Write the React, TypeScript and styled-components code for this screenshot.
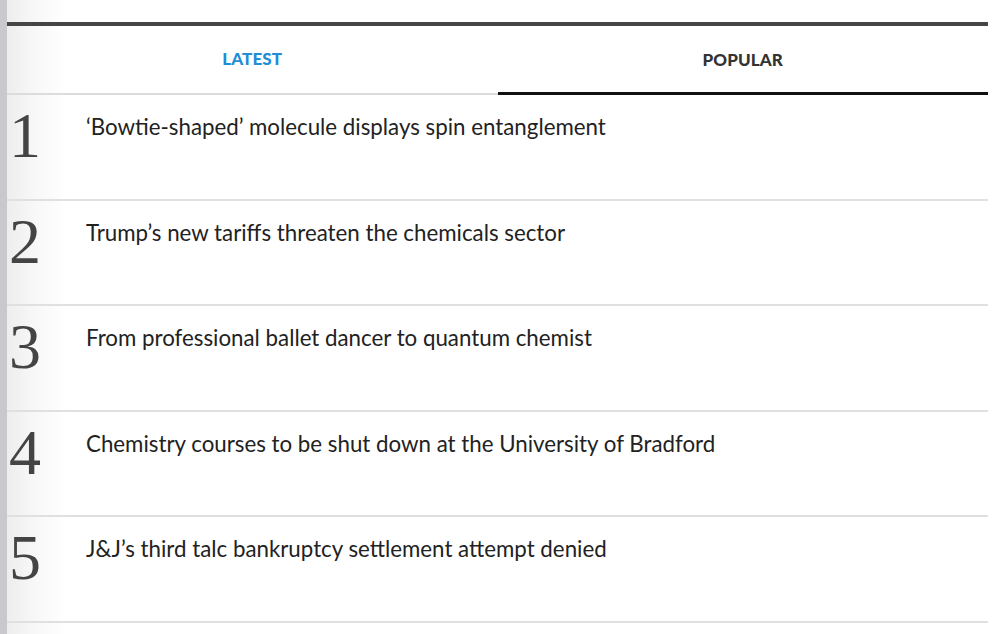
import React from "react";
import styled, { createGlobalStyle } from "styled-components";

const GlobalStyle = createGlobalStyle`
  html, body {
    margin: 0;
    padding: 0;
    background: #fff;
  }
  body {
    font-family: "Lato", "Liberation Sans", sans-serif;
  }
`;

const Page = styled.div`
  display: flex;
  width: 1000px;
  height: 634px;
  overflow: hidden;
  background: #fff;
`;

const Edge = styled.div`
  width: 7px;
  flex: none;
  background: #c9c9cd;
`;

const Panel = styled.div`
  width: 981px;
  flex: none;
  padding-top: 22px;
  background: linear-gradient(to right, #ededed 0px, #f7f7f7 25px, #ffffff 60px);
`;

const TopRule = styled.div`
  height: 4px;
  background: #454545;
`;

const Tabs = styled.div`
  display: flex;
  height: 69px;
`;

interface TabProps {
  active?: boolean;
}

const Tab = styled.div<TabProps>`
  flex: 1;
  display: flex;
  align-items: center;
  justify-content: center;
  box-sizing: border-box;
  border-bottom: ${({ active }) => (active ? "3px solid #111" : "2px solid #dcdcdc")};
  padding-bottom: ${({ active }) => (active ? "0" : "2px")};
  font-size: 17px;
  font-weight: 900;
  letter-spacing: 0.1px;
  color: ${({ active }) => (active ? "#333" : "#1f8ed4")};
`;

const List = styled.ol`
  list-style: none;
  margin: 0;
  padding: 0;
`;

const Row = styled.li`
  display: flex;
  align-items: flex-start;
  height: 105.5px;
  box-sizing: border-box;
  border-bottom: 2px solid #e0e0e0;
`;

const Rank = styled.div`
  width: 79px;
  flex: none;
  padding-top: 10px;
  padding-left: 2px;
  box-sizing: border-box;
  font-family: "Liberation Serif", "DejaVu Serif", serif;
  font-size: 64px;
  line-height: 62px;
  color: #444;
`;

const Title = styled.div`
  padding-top: 18px;
  font-size: 22.3px;
  line-height: 27px;
  color: #222;
`;

const stories = [
  "\u2018Bowtie-shaped\u2019 molecule displays spin entanglement",
  "Trump\u2019s new tariffs threaten the chemicals sector",
  "From professional ballet dancer to quantum chemist",
  "Chemistry courses to be shut down at the University of Bradford",
  "J&J\u2019s third talc bankruptcy settlement attempt denied",
];

const App = () => {
  return (
    <>
      <GlobalStyle />
      <Page>
        <Edge />
        <Panel>
          <TopRule />
          <Tabs>
            <Tab>LATEST</Tab>
            <Tab active>POPULAR</Tab>
          </Tabs>
          <List>
            {stories.map((s, i) => (
              <Row key={i}>
                <Rank>{i + 1}</Rank>
                <Title>{s}</Title>
              </Row>
            ))}
          </List>
        </Panel>
      </Page>
    </>
  );
};

export default App;
